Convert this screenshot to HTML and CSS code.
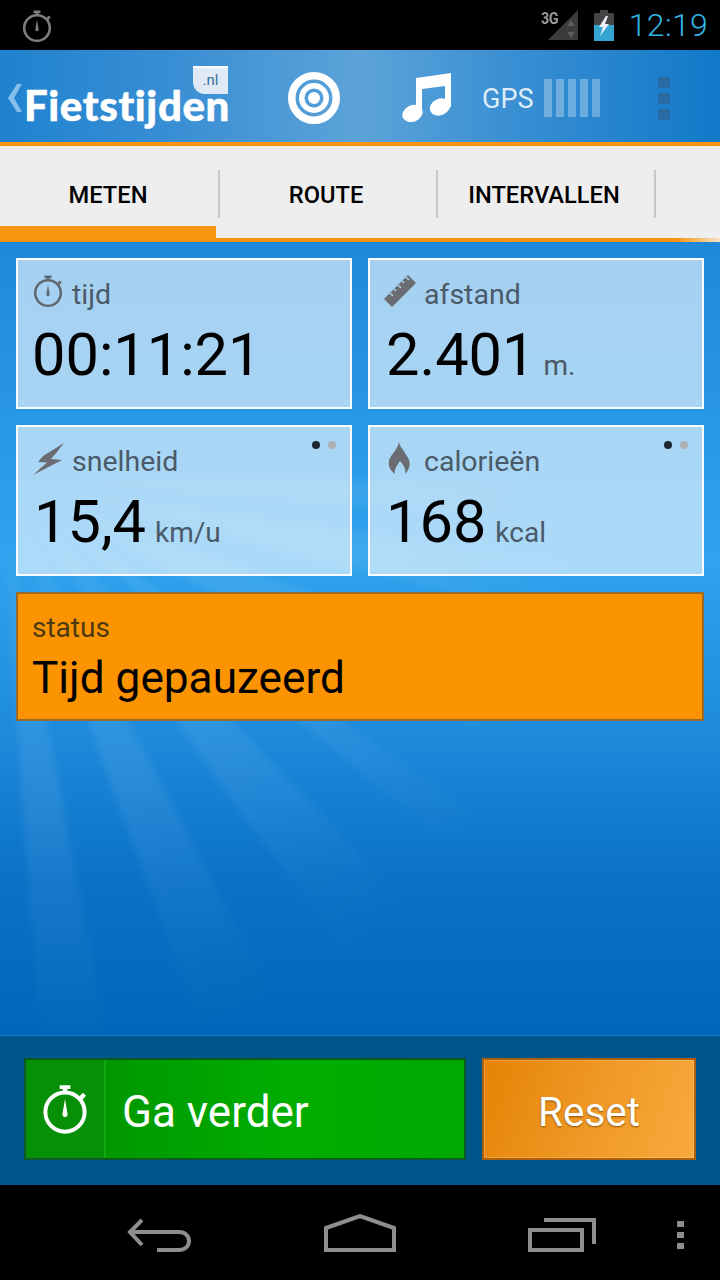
FILE: index.html
```html
<!DOCTYPE html>
<html lang="en">
<head>
  <meta charset="UTF-8">
  <meta name="viewport" content="width=device-width, initial-scale=1.0">
  <title>Fietstijden</title>
  <link rel="stylesheet" href="styles.css">
</head>
<body>
  <svg class="defs" width="0" height="0">
    <symbol id="stopwatch" viewBox="0 0 30 34">
      <circle cx="15" cy="19" r="12.8" fill="none" stroke="currentColor" stroke-width="2.6"/>
      <path d="M11.5 1.5h7v2.4h-2v3h-3v-3h-2z" fill="currentColor"/>
      <path d="M24 9.2l2.6-2.8 2.2 2-2.7 2.8z" fill="currentColor"/>
      <path d="M15 10.5l1.6 9.5a1.7 1.7 0 1 1-3.2 0z" fill="currentColor"/>
    </symbol>
  </svg>

  <!-- Status bar -->
  <div class="status-bar">
    <svg class="status-watch"><use href="#stopwatch"/></svg>
    <div class="status-right">
      <div class="signal">
        <span class="signal-label">3G</span>
        <svg width="30" height="30" viewBox="0 0 30 30">
          <path d="M30 0v30H0z" fill="#3c3c3c"/>
          <path d="M23 10l4 6h-8zM23 28l-4-6h8z" fill="#5d5d5d"/>
        </svg>
      </div>
      <svg class="battery" width="20" height="31" viewBox="0 0 20 31">
        <path d="M6 0h8v3h6v28H0V3h6z" fill="#444"/>
        <path d="M0 15h20v16H0z" fill="#33a5d0"/>
        <path d="M12 6L5 17h4l-3 9 9-12h-4l3-8z" fill="#eef"/>
      </svg>
      <span class="clock">12:19</span>
    </div>
  </div>

  <!-- Header -->
  <header class="app-header">
    <div class="logo">
      <svg class="logo-back" width="14" height="28" viewBox="0 0 14 28"><path d="M9 0h5L6 14l8 14H9L0 14z"/></svg>
      <span class="logo-text">Fietstijden</span>
      <div class="logo-flag"><span>.nl</span></div>
    </div>
    <svg class="target" width="52" height="52" viewBox="0 0 52 52">
      <circle cx="26" cy="26" r="22.250" fill="none" stroke="#fff" stroke-width="7.500"/>
      <circle cx="26" cy="26" r="12.250" fill="none" stroke="#fff" stroke-width="5.500"/>
      <circle cx="26" cy="26" r="6" fill="#fff"/>
    </svg>
    <svg class="music" width="49" height="49" viewBox="0 0 49 49">
      <ellipse cx="10.500" cy="40.500" rx="10.500" ry="8.200" transform="rotate(-24 10.500 40.500)" fill="#fff"/>
      <ellipse cx="38" cy="34" rx="10.500" ry="8.200" transform="rotate(-24 38 34)" fill="#fff"/>
      <path d="M14 40V5L49 0v34h-6V13l-23 3v24z" fill="#fff"/>
    </svg>
    <span class="gps-label">GPS</span>
    <div class="gps-bars"><i></i><i></i><i></i><i></i><i></i></div>
    <div class="overflow"><i></i><i></i><i></i></div>
  </header>

  <!-- Tabs -->
  <nav class="tabs">
    <div class="tab active"><span>METEN</span></div>
    <div class="tab"><span>ROUTE</span></div>
    <div class="tab"><span>INTERVALLEN</span></div>
  </nav>

  <!-- Main -->
  <main class="content">
    <div class="card-grid">
      <div class="card">
        <div class="card-label">
          <svg class="card-icon watch-icon"><use href="#stopwatch"/></svg>
          <span>tijd</span>
        </div>
        <div class="card-value time">00:11:21</div>
      </div>
      <div class="card">
        <div class="card-label">
          <svg class="card-icon" width="32" height="32" viewBox="0 0 32 32">
            <path d="M0 24L24 0l8 8L8 32z" fill="#6a6c72"/>
            <path d="M6 18l3 3M10 14l2 2M14 10l3 3M18 6l2 2M22 2l3 3" stroke="#a9cfec" stroke-width="1.500"/>
          </svg>
          <span>afstand</span>
        </div>
        <div class="card-value">2.401<small class="unit-m">m.</small></div>
      </div>
      <div class="card">
        <div class="pager"><i class="on"></i><i></i></div>
        <div class="card-label">
          <svg class="card-icon" width="32" height="32" viewBox="0 0 32 32">
            <path d="M32 1L11 14l-5 6 9 .5L1 33l29-15-11-1 6-7z" fill="#6a6c72"/>
          </svg>
          <span>snelheid</span>
        </div>
        <div class="card-value">15,4<small>km/u</small></div>
      </div>
      <div class="card">
        <div class="pager"><i class="on"></i><i></i></div>
        <div class="card-label">
          <svg class="card-icon" width="32" height="32" viewBox="0 0 32 32">
            <path d="M15 0c1 5 4 7 6 11 1 2 3 4 4 7 2 6-1 11-4 14 1-4 0-7-5-13-4 6-6 9-5 13-4-3-7-7-6-13 1-6 8-10 10-19z" fill="#6a6c72"/>
          </svg>
          <span>calorieën</span>
        </div>
        <div class="card-value">168<small>kcal</small></div>
      </div>
    </div>

    <div class="status-card">
      <div class="status-label">status</div>
      <div class="status-value">Tijd gepauzeerd</div>
    </div>
  </main>

  <!-- Buttons -->
  <div class="actions">
    <div class="btn btn-go">
      <div class="btn-icon"><svg class="go-watch"><use href="#stopwatch"/></svg></div>
      <span class="btn-text">Ga verder</span>
    </div>
    <div class="btn btn-reset"><span class="btn-text">Reset</span></div>
  </div>

  <!-- Android nav -->
  <div class="nav-bar">
    <svg class="nav-back" width="66" height="34" viewBox="0 0 66 34" fill="none" stroke="#8e8e8e" stroke-width="4">
      <path d="M15 2L3 14l12 13M3 14h49c6 0 10 4 10 9s-4 9-10 9H30"/>
    </svg>
    <svg class="nav-home" width="72" height="38" viewBox="0 0 72 38" fill="none" stroke="#8e8e8e" stroke-width="4">
      <path d="M2 36V14L36 2l34 12v22z"/>
    </svg>
    <svg class="nav-recent" width="68" height="34" viewBox="0 0 68 34" fill="none" stroke="#8e8e8e" stroke-width="4">
      <path d="M2 12h52v20H2zM16 2h50v24"/>
    </svg>
    <div class="nav-dots"><i></i><i></i><i></i></div>
  </div>
</body>
</html>
```

FILE: styles.css
```css
body {
  font-family: Roboto, "Liberation Sans", sans-serif;
  margin: 0;
  width: 720px;
  height: 1280px;
  overflow: hidden;
  display: flex;
  flex-direction: column;
  background: #000;
}

.defs {
  position: absolute;
}

/* Status bar */
.status-bar {
  height: 50px;
  flex: none;
  background: #000;
  display: flex;
  align-items: center;
  justify-content: space-between;
  padding: 0 12px 0 22px;
}

.status-watch {
  width: 30px;
  height: 34px;
  color: #7d7d7d;
  margin-top: 1px;
}

.status-right {
  display: flex;
  align-items: center;
}

.signal {
  display: flex;
  position: relative;
  width: 37px;
  justify-content: flex-end;
}

.signal-label {
  position: absolute;
  left: 0;
  top: -1px;
  font-size: 16px;
  font-weight: 700;
  color: #9a9a9a;
  letter-spacing: -0.5px;
  transform: scaleX(0.9);
  transform-origin: left;
}

.battery {
  margin-left: 16px;
}

.clock {
  font-size: 32px;
  font-weight: 300;
  color: #33b5e5;
  margin-left: 15px;
  letter-spacing: 0.3px;
}

/* Header */
.app-header {
  height: 92px;
  flex: none;
  box-sizing: border-box;
  padding-top: 4px;
  background: linear-gradient(to right, #1f82cf 0%, #3a8fd4 25%, #5ca3d9 50%, #3b90d3 70%, #1179c9 100%);
  display: flex;
  align-items: center;
  position: relative;
}

.logo {
  width: 288px;
  flex: none;
  height: 88px;
  position: relative;
}

.logo-back {
  position: absolute;
  left: 8px;
  top: 30px;
  fill: #85bfea;
}

.logo-text {
  position: absolute;
  left: 24px;
  top: 40px;
  font-family: Lato, "Open Sans", sans-serif;
  font-size: 42px;
  font-weight: 900;
  line-height: 22px;
  color: #fff;
  letter-spacing: 0.6px;
  -webkit-text-stroke: 0.5px #fff;
}

.logo-flag {
  position: absolute;
  left: 193px;
  top: 12px;
  width: 35px;
  height: 28px;
  background: linear-gradient(#fff 0 2px, #dfeaf6 2px);
  border-radius: 0 0 0 12px;
  text-align: center;
}

.logo-flag span {
  font-size: 15px;
  line-height: 28px;
  color: #3d6e94;
}

.music {
  margin-left: 62px;
  margin-top: -1px;
}

.gps-label {
  font-size: 27px;
  color: #dcecf8;
  margin-left: 31px;
  margin-top: 2px;
}

.gps-bars {
  display: flex;
  gap: 4px;
  margin-left: 11px;
}

.gps-bars i {
  width: 8px;
  height: 38px;
  background: rgba(255, 255, 255, 0.3);
}

.overflow {
  margin-left: 58px;
  display: flex;
  flex-direction: column;
  gap: 5px;
}

.overflow i {
  width: 12px;
  height: 11px;
  background: #2a6aa5;
  border-radius: 1px;
}

/* Tabs */
.tabs {
  height: 100px;
  flex: none;
  box-sizing: border-box;
  background: #eee;
  border-top: 4px solid #f7950f;
  display: flex;
  padding-bottom: 4px;
  position: relative;
}

.tabs::after {
  content: "";
  position: absolute;
  left: 0;
  right: 0;
  bottom: 0;
  height: 4px;
  background: linear-gradient(to right, #f7950f 94%, #f6e3c8 100%);
}

.tab {
  width: 218px;
  box-sizing: border-box;
  display: flex;
  align-items: center;
  justify-content: center;
  font-size: 23.7px;
  font-weight: 500;
  color: #000;
  position: relative;
}

.tab span {
  margin-top: 6px;
  margin-right: 2px;
}

.tab::after {
  content: "";
  position: absolute;
  right: -2px;
  top: 24px;
  width: 2px;
  height: 48px;
  background: #c8c8c8;
}

.tab.active::before {
  content: "";
  position: absolute;
  left: 0;
  bottom: -4px;
  width: 216px;
  height: 16px;
  background: #f7950f;
  z-index: 1;
}

/* Main */
.content {
  flex: 1;
  padding: 16px;
  position: relative;
  overflow: hidden;
  background: linear-gradient(#1f88da 0%, #2fa3ee 40%, #1c88da 64%, #0a72c8 80%, #0066ba 100%);
  border-bottom: 1px solid #1a7ec4;
}

.content::before {
  content: "";
  position: absolute;
  inset: 0;
  filter: blur(3px);
  background: conic-gradient(from 90deg at 0 238px,
    rgba(255, 255, 255, 0.08) 0deg 4deg, transparent 4deg 8deg,
    rgba(255, 255, 255, 0.08) 8deg 14deg, transparent 14deg 20deg,
    rgba(255, 255, 255, 0.08) 20deg 28deg, transparent 28deg 35deg,
    rgba(255, 255, 255, 0.08) 35deg 39deg, transparent 39deg 46deg,
    rgba(255, 255, 255, 0.08) 46deg 54deg, transparent 54deg 62deg,
    rgba(255, 255, 255, 0.08) 62deg 70deg, transparent 70deg 79deg,
    rgba(255, 255, 255, 0.08) 79deg 86deg, transparent 86deg 360deg);
  -webkit-mask-image: radial-gradient(circle at 0 238px, transparent 4%, #000 20%, #000 36%, transparent 66%);
  mask-image: radial-gradient(circle at 0 238px, transparent 4%, #000 20%, #000 36%, transparent 66%);
}

.card-grid {
  display: grid;
  grid-template-columns: 336px 336px;
  grid-auto-rows: 151px;
  gap: 16px;
  position: relative;
}

.card {
  box-sizing: border-box;
  background: rgba(255, 255, 255, 0.6);
  border: 2px solid rgba(255, 255, 255, 0.92);
  padding: 16px 14px 0;
  position: relative;
}

.card-label {
  display: flex;
  align-items: center;
  height: 36px;
  font-size: 28.5px;
  color: #4a5a68;
}

.card-icon {
  width: 32px;
  height: 32px;
  flex: none;
  margin-right: 8px;
  margin-top: -6px;
}

.watch-icon {
  width: 30px;
  height: 34px;
  color: #616b75;
  margin-left: 1px;
  margin-right: 9px;
}

.card-value {
  font-size: 59.5px;
  line-height: 70px;
  color: #000;
  margin-top: 8px;
  margin-left: 2px;
  white-space: nowrap;
}

.card-value.time {
  margin-left: 0;
}

.card-value small {
  font-size: 28px;
  color: #4a5a68;
  margin-left: 9px;
}

.card-value small.unit-m {
  margin-left: 8px;
}

.pager {
  position: absolute;
  top: 14px;
  right: 14px;
  display: flex;
  gap: 8px;
}

.pager i {
  width: 8px;
  height: 8px;
  border-radius: 50%;
  background: #b0b0b8;
}

.pager i.on {
  background: #1c2730;
}

.status-card {
  position: relative;
  margin-top: 16px;
  box-sizing: border-box;
  height: 129px;
  background: #fc9300;
  border: 2px solid #9a6a2a;
  padding: 18px 14px 0;
}

.status-label {
  font-size: 28px;
  line-height: 32px;
  color: #4e3a12;
}

.status-value {
  font-size: 44.2px;
  line-height: 54px;
  color: #000;
  margin-top: 7px;
}

/* Buttons */
.actions {
  height: 149px;
  flex: none;
  box-sizing: border-box;
  background: #00558a;
  display: flex;
  gap: 16px;
  padding: 22px 24px 25px;
}

.btn {
  box-sizing: border-box;
  border: 2px solid;
  display: flex;
  align-items: center;
  color: #fff;
  font-size: 44px;
}

.btn-text {
  margin-top: 5px;
}

.btn-go {
  width: 442px;
  border-color: #0c5a24;
  background: linear-gradient(to right, #008f00, #00ad00 60%, #00a800);
}

.btn-icon {
  width: 78px;
  height: 100%;
  border-right: 2px solid #16a516;
  background: #078f07;
  display: flex;
  align-items: center;
  justify-content: center;
  margin-right: 16px;
}

.go-watch {
  width: 46px;
  height: 54px;
  color: #fff;
}

.btn-reset {
  width: 214px;
  border-color: #ad5f0a;
  background: linear-gradient(110deg, #e58305, #f09a28 55%, #f8a93c);
  box-shadow: inset 0 0 0 1px rgba(255, 255, 255, 0.2);
  justify-content: center;
  font-size: 40.5px;
  text-shadow: 0 1px 2px #8a5000;
}

/* Android nav */
.nav-bar {
  height: 95px;
  flex: none;
  box-sizing: border-box;
  background: #000;
  display: flex;
  align-items: flex-end;
  padding-bottom: 28px;
}

.nav-back {
  margin-left: 127px;
}

.nav-home {
  margin-left: 131px;
}

.nav-recent {
  margin-left: 132px;
}

.nav-dots {
  margin-left: 81px;
  display: flex;
  flex-direction: column;
  gap: 5px;
  padding-bottom: 3px;
}

.nav-dots i {
  width: 7px;
  height: 6px;
  background: #8e8e8e;
}
```
